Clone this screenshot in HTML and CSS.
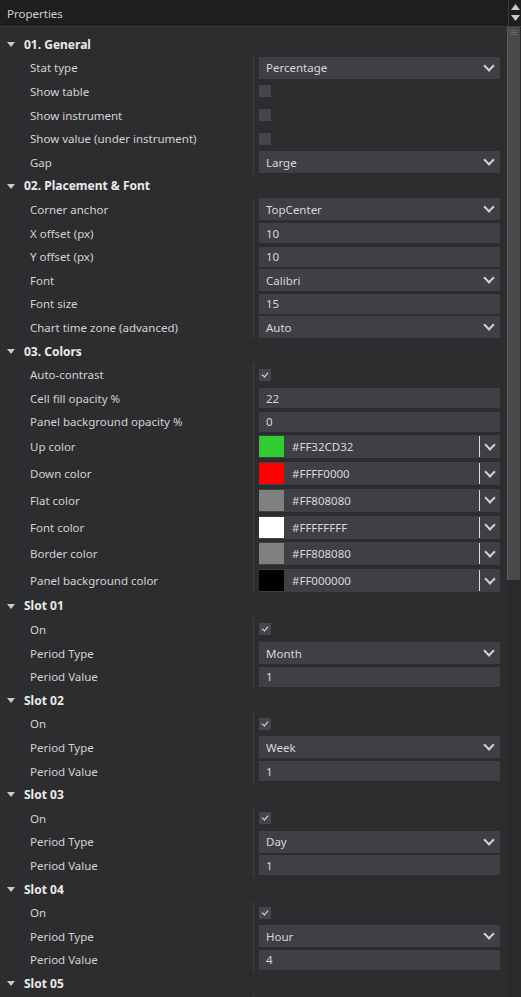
FILE: index.html
```html
<!DOCTYPE html>
<html lang="en">
<head>
	<meta charset="utf-8">
	<title>Properties</title>
	<link rel="stylesheet" href="styles.css">
</head>
<body>
	<div class="props">
		<div class="props-title">
			<span class="title-text">Properties</span>
			<div class="title-btns">
				<svg width="9" height="6" viewBox="0 0 9 6"><polygon points="0,6 4.5,0 9,6" fill="#c8c8c8"/></svg>
				<svg width="9" height="6" viewBox="0 0 9 6"><polygon points="0,0 4.5,6 9,0" fill="#c8c8c8"/></svg>
			</div>
		</div>
		<div class="props-body">
			<div class="list">

				<div class="group">
					<div class="group-head"><span class="caret"></span>01. General</div>
					<div class="row"><div class="label">Stat type</div><div class="value"><div class="select">Percentage<span class="chev"></span></div></div></div>
					<div class="row"><div class="label">Show table</div><div class="value"><div class="check"></div></div></div>
					<div class="row"><div class="label">Show instrument</div><div class="value"><div class="check"></div></div></div>
					<div class="row"><div class="label">Show value (under instrument)</div><div class="value"><div class="check"></div></div></div>
					<div class="row"><div class="label">Gap</div><div class="value"><div class="select">Large<span class="chev"></span></div></div></div>
				</div>

				<div class="group">
					<div class="group-head"><span class="caret"></span>02. Placement &amp; Font</div>
					<div class="row"><div class="label">Corner anchor</div><div class="value"><div class="select">TopCenter<span class="chev"></span></div></div></div>
					<div class="row"><div class="label">X offset (px)</div><div class="value"><div class="text">10</div></div></div>
					<div class="row"><div class="label">Y offset (px)</div><div class="value"><div class="text">10</div></div></div>
					<div class="row"><div class="label">Font</div><div class="value"><div class="select">Calibri<span class="chev"></span></div></div></div>
					<div class="row"><div class="label">Font size</div><div class="value"><div class="text">15</div></div></div>
					<div class="row"><div class="label">Chart time zone (advanced)</div><div class="value"><div class="select">Auto<span class="chev"></span></div></div></div>
				</div>

				<div class="group">
					<div class="group-head"><span class="caret"></span>03. Colors</div>
					<div class="row"><div class="label">Auto-contrast</div><div class="value"><div class="check on"></div></div></div>
					<div class="row"><div class="label">Cell fill opacity %</div><div class="value"><div class="text">22</div></div></div>
					<div class="row"><div class="label">Panel background opacity %</div><div class="value"><div class="text">0</div></div></div>
					<div class="row row-color"><div class="label">Up color</div><div class="value"><div class="color"><span class="swatch" style="background:#32CD32"></span><span class="hex">#FF32CD32</span><span class="color-btn"><span class="chev"></span></span></div></div></div>
					<div class="row row-color"><div class="label">Down color</div><div class="value"><div class="color"><span class="swatch" style="background:#FF0000"></span><span class="hex">#FFFF0000</span><span class="color-btn"><span class="chev"></span></span></div></div></div>
					<div class="row row-color"><div class="label">Flat color</div><div class="value"><div class="color"><span class="swatch" style="background:#808080"></span><span class="hex">#FF808080</span><span class="color-btn"><span class="chev"></span></span></div></div></div>
					<div class="row row-color"><div class="label">Font color</div><div class="value"><div class="color"><span class="swatch" style="background:#FFFFFF"></span><span class="hex">#FFFFFFFF</span><span class="color-btn"><span class="chev"></span></span></div></div></div>
					<div class="row row-color"><div class="label">Border color</div><div class="value"><div class="color"><span class="swatch" style="background:#808080"></span><span class="hex">#FF808080</span><span class="color-btn"><span class="chev"></span></span></div></div></div>
					<div class="row row-color"><div class="label">Panel background color</div><div class="value"><div class="color"><span class="swatch" style="background:#000000"></span><span class="hex">#FF000000</span><span class="color-btn"><span class="chev"></span></span></div></div></div>
				</div>

				<div class="group">
					<div class="group-head"><span class="caret"></span>Slot 01</div>
					<div class="row"><div class="label">On</div><div class="value"><div class="check on"></div></div></div>
					<div class="row"><div class="label">Period Type</div><div class="value"><div class="select">Month<span class="chev"></span></div></div></div>
					<div class="row"><div class="label">Period Value</div><div class="value"><div class="text">1</div></div></div>
				</div>

				<div class="group">
					<div class="group-head"><span class="caret"></span>Slot 02</div>
					<div class="row"><div class="label">On</div><div class="value"><div class="check on"></div></div></div>
					<div class="row"><div class="label">Period Type</div><div class="value"><div class="select">Week<span class="chev"></span></div></div></div>
					<div class="row"><div class="label">Period Value</div><div class="value"><div class="text">1</div></div></div>
				</div>

				<div class="group">
					<div class="group-head"><span class="caret"></span>Slot 03</div>
					<div class="row"><div class="label">On</div><div class="value"><div class="check on"></div></div></div>
					<div class="row"><div class="label">Period Type</div><div class="value"><div class="select">Day<span class="chev"></span></div></div></div>
					<div class="row"><div class="label">Period Value</div><div class="value"><div class="text">1</div></div></div>
				</div>

				<div class="group">
					<div class="group-head"><span class="caret"></span>Slot 04</div>
					<div class="row"><div class="label">On</div><div class="value"><div class="check on"></div></div></div>
					<div class="row"><div class="label">Period Type</div><div class="value"><div class="select">Hour<span class="chev"></span></div></div></div>
					<div class="row"><div class="label">Period Value</div><div class="value"><div class="text">4</div></div></div>
				</div>

				<div class="group">
					<div class="group-head"><span class="caret"></span>Slot 05</div>
					<div class="row"><div class="label"></div><div class="value"></div></div>
				</div>

			</div>
			<div class="scrollbar">
				<div class="thumb"><span></span><span></span><span></span></div>
			</div>
		</div>
	</div>
</body>
</html>
```

FILE: styles.css
```css
html, body {
	margin: 0;
	padding: 0;
	background-color: #2d2d30;
}
body {
	font-family: "Noto Sans", "Open Sans", sans-serif;
	font-size: 11.5px;
	color: #d4d4d4;
}
.props {
	width: 521px;
	height: 997px;
	overflow: hidden;
	background-color: #2d2d30;
}
.props-title {
	height: 26px;
	display: flex;
	background-color: #1e1e1e;
	border-bottom: 1px solid #3a3a3a;
}
.title-text {
	flex: 1;
	padding: 1px 0 0 7px;
	line-height: 26px;
	color: #d0d0d0;
}
.title-btns {
	width: 13px;
	border-left: 1px solid #3a3a3a;
	display: flex;
	flex-direction: column;
	align-items: center;
	justify-content: space-between;
	padding: 4px 0 5px;
	box-sizing: border-box;
}
.props-body {
	display: flex;
}
.list {
	flex: 1;
	padding-top: 5.5px;
}
.group-head {
	height: 23.6px;
	display: flex;
	align-items: center;
	padding-left: 24px;
	position: relative;
	font-size: 12px;
	font-weight: bold;
	color: #eaeaea;
}
.caret {
	position: absolute;
	left: 7px;
	top: 9.5px;
	width: 0;
	height: 0;
	border-left: 4.5px solid transparent;
	border-right: 4.5px solid transparent;
	border-top: 5px solid #c8c8c8;
}
.row {
	height: 23.6px;
	display: grid;
	grid-template-columns: 253px 1fr;
}
.row-color {
	height: 26.75px;
}
.label {
	padding-left: 30px;
	display: flex;
	align-items: center;
	color: #d2d2d2;
	white-space: nowrap;
}
.value {
	border-left: 1px solid #3e3e42;
	padding: 0 7px 0 5px;
	display: flex;
	align-items: center;
}
.select, .text, .color {
	flex: 1;
	background-color: #3f3f46;
	display: flex;
	align-items: center;
	box-sizing: border-box;
	color: #d8d8d8;
}
.select {
	height: 22px;
	padding: 0 7px;
	justify-content: space-between;
}
.text {
	height: 20px;
	padding: 0 7px;
}
.color {
	height: 23px;
	padding: 1px 0;
}
.swatch {
	width: 25px;
	height: 21px;
}
.hex {
	flex: 1;
	padding-left: 8px;
}
.color-btn {
	width: 20px;
	height: 21px;
	border-left: 1px solid #dcdcdc;
	display: flex;
	align-items: center;
	justify-content: center;
}
.chev {
	width: 6px;
	height: 6px;
	border-right: 2px solid #d0d0d0;
	border-bottom: 2px solid #d0d0d0;
	transform: translateY(-2px) rotate(45deg);
}
.check {
	width: 12px;
	height: 12px;
	background-color: #45454c;
	position: relative;
}
.check.on::after {
	content: "";
	position: absolute;
	left: 4px;
	top: 2px;
	width: 3px;
	height: 5px;
	border-right: 1.5px solid #e8e8e8;
	border-bottom: 1.5px solid #e8e8e8;
	transform: rotate(40deg);
}
.scrollbar {
	width: 14px;
	height: 970px;
	background-color: #2a2a2a;
}
.thumb {
	width: 13px;
	height: 553px;
	background-color: #4a4a4a;
	border-left: 1px solid #5e5e5e;
	box-sizing: border-box;
	padding: 3px 3px 0 2px;
	display: flex;
	flex-direction: column;
	gap: 1px;
}
.thumb span {
	height: 1px;
	background-color: #666;
}
```
